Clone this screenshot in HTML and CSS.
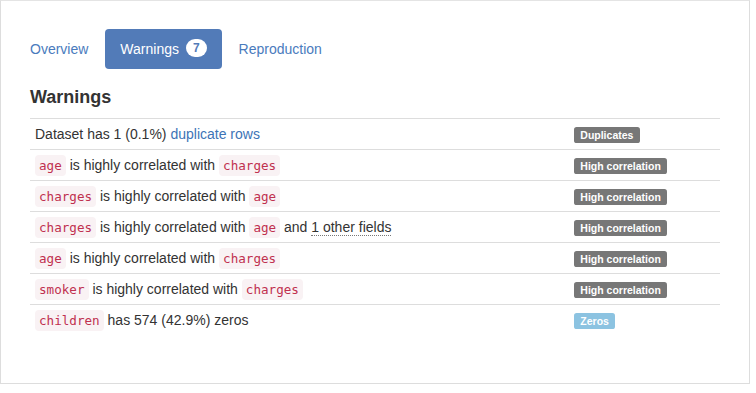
FILE: index.html
```html
<!DOCTYPE html>
<html lang="en">
   <head>
      <meta charset="UTF-8" />
      <meta name="viewport" content="width=device-width, initial-scale=1.0"/>
      <title>Warnings</title>
      <link rel="stylesheet" href="styles.css">
   </head>
   <body>
      <div class="panel">
         <!-- Abas -->
         <ul class="nav-pills">
            <li><a href="#">Overview</a></li>
            <li class="active"><a href="#">Warnings <span class="badge">7</span></a></li>
            <li><a href="#">Reproduction</a></li>
         </ul>
         <h4 class="title">Warnings</h4>
         <table class="warnings">
            <tr>
               <td>Dataset has 1 (0.1%) <a href="#">duplicate rows</a></td>
               <td class="tag"><span class="label">Duplicates</span></td>
            </tr>
            <tr>
               <td><code>age</code> is highly correlated with <code>charges</code></td>
               <td class="tag"><span class="label">High correlation</span></td>
            </tr>
            <tr>
               <td><code>charges</code> is highly correlated with <code>age</code></td>
               <td class="tag"><span class="label">High correlation</span></td>
            </tr>
            <tr>
               <td><code>charges</code> is highly correlated with <code>age</code> and <abbr title="bmi">1 other fields</abbr></td>
               <td class="tag"><span class="label">High correlation</span></td>
            </tr>
            <tr>
               <td><code>age</code> is highly correlated with <code>charges</code></td>
               <td class="tag"><span class="label">High correlation</span></td>
            </tr>
            <tr>
               <td><code>smoker</code> is highly correlated with <code>charges</code></td>
               <td class="tag"><span class="label">High correlation</span></td>
            </tr>
            <tr>
               <td><code>children</code> has 574 (42.9%) zeros</td>
               <td class="tag"><span class="label label-info">Zeros</span></td>
            </tr>
         </table>
      </div>
   </body>
</html>
```

FILE: styles.css
```css
body {
margin: 0;
font-family: "Liberation Sans", Arial, sans-serif;
font-size: 14px;
line-height: 1.42857;
color: #333;
background: #fff;
}
.panel {
width: 750px;
height: 384px;
box-sizing: border-box;
border: 1px solid #ddd;
border-top-color: #e4e4e4;
padding: 28px 29px 0 29px;
}
a {
color: #3d74b6;
text-decoration: none;
}
.nav-pills {
list-style: none;
margin: 0 0 0 -15px;
padding: 0;
display: flex;
}
.nav-pills li + li {
margin-left: 2px;
}
.nav-pills a {
display: block;
padding: 11px 15px 9px;
border-radius: 4px;
color: #4a7bbd;
}
.nav-pills .active a {
background: #527bb8;
color: #fff;
}
.badge {
display: inline-block;
padding: 3px 7px;
font-size: 12px;
font-weight: bold;
line-height: 1;
text-align: center;
border-radius: 10px;
background: #fff;
color: #527bb8;
vertical-align: middle;
position: relative;
top: -2px;
margin-left: 3px;
}
.title {
font-size: 18px;
font-weight: 600;
line-height: 1.1;
margin: 19px 0 10px;
color: #333;
}
.warnings {
width: 690px;
border-collapse: collapse;
}
.warnings td {
padding: 6px 5px 4px;
border-top: 1px solid #ddd;
vertical-align: top;
}
.warnings td.tag {
width: 141px;
}
code {
font-family: "DejaVu Sans Mono", Menlo, monospace;
font-size: 90%;
padding: 3px 4px;
color: #c0304f;
background: #f9f2f4;
border-radius: 4px;
}
abbr {
text-decoration: none;
border-bottom: 1px dotted #777;
cursor: help;
}
.label {
display: inline-block;
padding: .25em .6em .3em;
font-size: 75%;
font-weight: bold;
line-height: 1;
color: #fff;
background: #777;
border-radius: .25em;
white-space: nowrap;
vertical-align: baseline;
}
.label-info {
background: #8cc3e1;
}
```
